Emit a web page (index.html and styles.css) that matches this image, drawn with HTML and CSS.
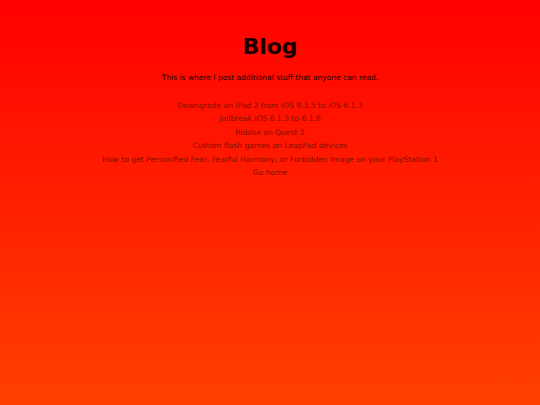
FILE: index.html
```html
<!DOCTYPE html>
<html>
<head>
<meta charset="utf-8">
<link rel="stylesheet" href="styles.css">
</head>
<body>
<main class="page">
  <h1 class="title">Blog</h1>
  <p class="intro">This is where I post additional stuff that anyone can read.</p>
  <nav class="links">
    <a href="#">Downgrade an iPad 2 from iOS 9.3.5 to iOS 6.1.3</a>
    <a href="#">Jailbreak iOS 6.1.3 to 6.1.6</a>
    <a href="#">Roblox on Quest 2</a>
    <a href="#">Custom flash games on LeapPad devices</a>
    <a href="#">How to get Personified Fear, Fearful Harmony, or Forbidden Image on your PlayStation 1</a>
    <a href="#">Go home</a>
  </nav>
</main>
</body>
</html>
```
FILE: styles.css
```css
html, body {
  margin: 0;
  height: 100%;
}
body {
  background: linear-gradient(#ff0000, #ff4000);
  font-family: "DejaVu Sans", sans-serif;
  color: #000;
}
.page {
  display: flex;
  flex-direction: column;
  align-items: center;
  padding-top: 33px;
}
.title {
  margin: 0;
  font-size: 22px;
  line-height: 28px;
  font-weight: bold;
  color: #1a0000;
}
.intro {
  margin: 12px 0 0;
  font-size: 7.5px;
  line-height: 10px;
  color: #1a0000;
}
.links {
  display: flex;
  flex-direction: column;
  align-items: center;
  margin-top: 15.5px;
}
.links a {
  font-size: 7.6px;
  line-height: 13.5px;
  color: #801000;
  text-decoration: none;
}
```
